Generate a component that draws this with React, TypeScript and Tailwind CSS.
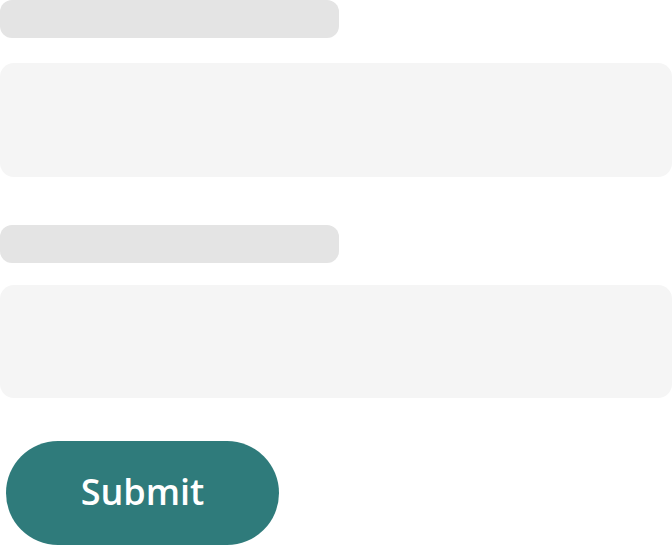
import React from "react";

const Field = ({ gap, boxH }: { gap: string; boxH: string }) => (
  <div className="flex flex-col">
    <div className="h-[38px] w-[339px] rounded-[12px] bg-[#e4e4e4]" />
    <div className={`${gap} ${boxH} w-full rounded-[14px] bg-[#f5f5f5]`} />
  </div>
);

export default function App() {
  return (
    <div className="w-[672px] h-[546px] overflow-hidden bg-white font-['Open_Sans',sans-serif]">
      <Field gap="mt-[25px]" boxH="h-[114px]" />
      <div className="mt-[48px]">
        <Field gap="mt-[22px]" boxH="h-[113px]" />
      </div>
      <button className="ml-[6px] mt-[43px] h-[104px] w-[273px] rounded-full bg-[#2f7b7b] pb-[2px] text-[36px] font-semibold text-white">
        Submit
      </button>
    </div>
  );
}
